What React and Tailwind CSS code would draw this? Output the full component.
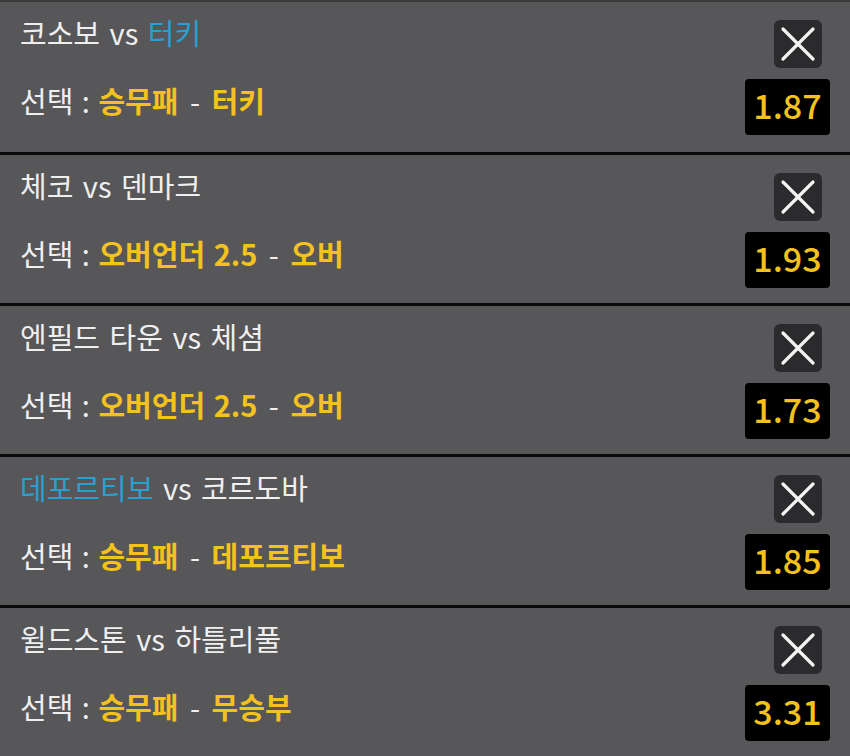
import React from "react";

const bets = [
  { home: "코소보", away: "터키", pick: "away", market: "승무패", choice: "터키", odds: "1.87" },
  { home: "체코", away: "덴마크", pick: null, market: "오버언더 2.5", choice: "오버", odds: "1.93" },
  { home: "엔필드 타운", away: "체셤", pick: null, market: "오버언더 2.5", choice: "오버", odds: "1.73" },
  { home: "데포르티보", away: "코르도바", pick: "home", market: "승무패", choice: "데포르티보", odds: "1.85" },
  { home: "윌드스톤", away: "하틀리풀", pick: null, market: "승무패", choice: "무승부", odds: "3.31" },
];

const CloseIcon = () => (
  <svg width="48" height="48" viewBox="0 0 48 48">
    <line x1="9" y1="9" x2="39" y2="39" stroke="#f4f4f4" strokeWidth="3.2" strokeLinecap="round" />
    <line x1="39" y1="9" x2="9" y2="39" stroke="#f4f4f4" strokeWidth="3.2" strokeLinecap="round" />
  </svg>
);

const BetCard = ({ bet, first, last }) => {
  const homeColor = bet.pick === "home" ? "text-[#2aa0d2]" : "text-[#efefef]";
  const awayColor = bet.pick === "away" ? "text-[#2aa0d2]" : "text-[#efefef]";

  return (
    <div
      className={
        "flex justify-between bg-[#575658] pl-5 pr-5 " +
        (last ? "h-[148px]" : first ? "h-[153px] border-b-[3px] border-[#0a0a0a]" : "h-[151px] border-b-[3px] border-[#0a0a0a]")
      }
    >
      {/* Match + selection */}
      <div className="flex flex-col">
        <div className="mt-[16px] text-[29px] leading-[29px] whitespace-pre [word-spacing:3px]">
          <span className={homeColor}>{bet.home}</span>
          <span className="text-[#efefef]"> vs </span>
          <span className={awayColor}>{bet.away}</span>
        </div>
        <div className="mt-[39px] text-[29px] leading-[29px] whitespace-pre [word-spacing:2px]">
          <span className="text-[#efefef]">선택 : </span>
          <span className="font-bold text-[#f4c21c]">{bet.market}</span>
          <span className="mx-[3px] text-[#efefef]"> - </span>
          <span className="font-bold text-[#f4c21c]">{bet.choice}</span>
        </div>
      </div>

      {/* Remove + odds */}
      <div className="flex flex-col items-end">
        <button className="mt-[18px] mr-2 flex h-12 w-12 items-center justify-center rounded-md bg-[#2b2a2d]">
          <CloseIcon />
        </button>
        <div className="mt-[11px] flex h-14 w-[85px] items-center justify-center rounded bg-black pb-1 text-[34px] font-medium leading-none text-[#f4c21c]">
          {bet.odds}
        </div>
      </div>
    </div>
  );
};

export default function App() {
  return (
    <div
      className="w-[850px] h-[756px] overflow-hidden bg-[#575658] border-t-2 border-[#3a3a3a]"
      style={{ fontFamily: '"Noto Sans CJK KR", "Noto Sans", sans-serif' }}
    >
      {bets.map((bet, i) => (
        <BetCard key={i} bet={bet} first={i === 0} last={i === bets.length - 1} />
      ))}
    </div>
  );
}
